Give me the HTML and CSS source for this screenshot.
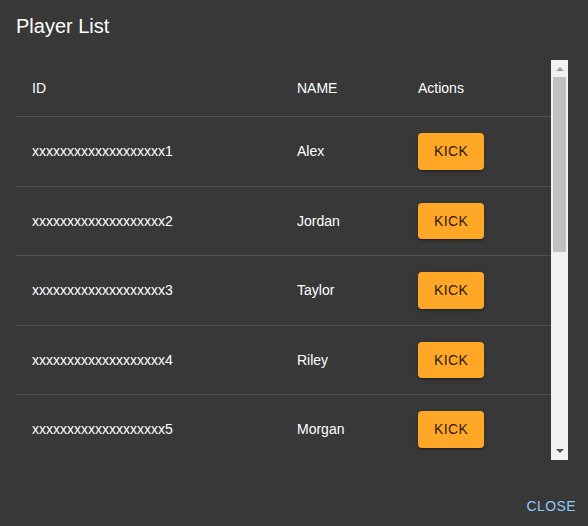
FILE: index.html
```html
<!DOCTYPE html>
<html>
<head>
<meta charset="UTF-8">
<title>Player List</title>
<link rel="stylesheet" href="styles.css">
</head>
<body>
<div class="dialog">
  <h2 class="title">Player List</h2>
  <div class="scroller">
    <div class="list">
      <div class="row head">
        <div class="cell">ID</div>
        <div class="cell">NAME</div>
        <div class="cell">Actions</div>
      </div>
      <div class="row">
        <div class="cell">xxxxxxxxxxxxxxxxxxx1</div>
        <div class="cell">Alex</div>
        <div class="cell"><button class="kick">KICK</button></div>
      </div>
      <div class="row">
        <div class="cell">xxxxxxxxxxxxxxxxxxx2</div>
        <div class="cell">Jordan</div>
        <div class="cell"><button class="kick">KICK</button></div>
      </div>
      <div class="row">
        <div class="cell">xxxxxxxxxxxxxxxxxxx3</div>
        <div class="cell">Taylor</div>
        <div class="cell"><button class="kick">KICK</button></div>
      </div>
      <div class="row">
        <div class="cell">xxxxxxxxxxxxxxxxxxx4</div>
        <div class="cell">Riley</div>
        <div class="cell"><button class="kick">KICK</button></div>
      </div>
      <div class="row">
        <div class="cell">xxxxxxxxxxxxxxxxxxx5</div>
        <div class="cell">Morgan</div>
        <div class="cell"><button class="kick">KICK</button></div>
      </div>
    </div>
    <div class="scrollbar">
      <div class="sb-btn"><span class="arrow-up"></span></div>
      <div class="track"><div class="thumb"></div></div>
      <div class="sb-btn down"><span class="arrow-down"></span></div>
    </div>
  </div>
  <div class="actions">
    <button class="close">CLOSE</button>
  </div>
</div>
</body>
</html>
```

FILE: styles.css
```css
html, body {
margin: 0;
padding: 0;
background: #383838;
}
.dialog {
width: 588px;
height: 526px;
background: #383838;
color: #fff;
font-family: "Liberation Sans", Arial, sans-serif;
font-size: 14px;
}
.title {
margin: 0;
padding: 10px 16px 18px;
font-size: 20px;
font-weight: normal;
line-height: 32px;
}
.scroller {
display: flex;
margin-left: 16px;
width: 552px;
height: 400px;
}
.list {
flex: 1;
overflow: hidden;
}
.scrollbar {
width: 17px;
display: flex;
flex-direction: column;
background: #f1f1f1;
}
.sb-btn {
height: 17px;
display: flex;
justify-content: center;
align-items: flex-start;
padding-top: 7px;
box-sizing: border-box;
}
.sb-btn.down {
padding-top: 6px;
}
.arrow-up {
width: 0;
height: 0;
border-left: 4px solid transparent;
border-right: 4px solid transparent;
border-bottom: 4px solid #a3a3a3;
}
.arrow-down {
width: 0;
height: 0;
border-left: 4px solid transparent;
border-right: 4px solid transparent;
border-top: 4px solid #505050;
}
.track {
flex: 1;
padding: 0 2px;
}
.thumb {
height: 175px;
background: #c1c1c1;
}
.row {
display: grid;
grid-template-columns: 265px 121px 1fr;
height: 69.5px;
box-sizing: border-box;
border-bottom: 1px solid #515151;
align-items: center;
}
.row.head {
height: 57px;
}
.cell {
padding: 0 16px;
line-height: 20px;
}
.kick {
height: 36.5px;
padding: 0 16px;
border: none;
border-radius: 4px;
background: #ffa726;
color: rgba(0,0,0,0.87);
font-family: "Liberation Sans", Arial, sans-serif;
font-size: 14px;
letter-spacing: 0.4px;
box-shadow: 0 3px 1px -2px rgba(0,0,0,0.2), 0 2px 2px 0 rgba(0,0,0,0.14), 0 1px 5px 0 rgba(0,0,0,0.12);
}
.actions {
display: flex;
justify-content: flex-end;
padding: 12px 4px 0 0;
}
.close {
border: none;
background: none;
color: #90caf9;
font-family: "Liberation Sans", Arial, sans-serif;
font-size: 14px;
letter-spacing: 0.4px;
padding: 22px 8px 6px;
line-height: 24px;
}
```
